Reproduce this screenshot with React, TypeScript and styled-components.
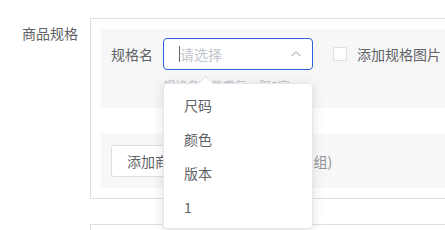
import React from "react";
import styled, { createGlobalStyle } from "styled-components";

const Global = createGlobalStyle`
  html, body { margin: 0; padding: 0; background: #fff; overflow: hidden; }
  body { font-family: "Noto Sans CJK SC", "Noto Sans", sans-serif; font-size: 14px; color: #606266; }
`;

const Page = styled.div`
  width: 445px;
  height: 230px;
  overflow: hidden;
  padding-top: 17px;
  box-sizing: border-box;
`;

const FormRow = styled.div`
  display: flex;
  align-items: flex-start;
  margin-bottom: 24px;
`;

const FormLabel = styled.div`
  width: 90px;
  flex: none;
  box-sizing: border-box;
  padding-right: 12px;
  text-align: right;
  line-height: 32px;
  font-size: 14px;
  color: #606266;
`;

const Box = styled.div`
  flex: none;
  width: 600px;
  margin-top: 1px;
  border: 1px solid #dcdfe6;
  padding: 10px;
  box-sizing: border-box;
  min-height: 40px;
`;

const GrayBlock = styled.div<{ $pt: number; $pb: number }>`
  background: #f7f7f7;
  padding: ${(p) => p.$pt}px 10px ${(p) => p.$pb}px 10px;
  display: flex;
  align-items: flex-start;
`;

const Spacer = styled.div`
  height: 26px;
`;

const SpecLabel = styled.div`
  line-height: 32px;
  margin-right: 10px;
  color: #606266;
`;

const SelectWrap = styled.div`
  position: relative;
  width: 150px;
`;

const SelectBox = styled.div`
  height: 32px;
  box-sizing: border-box;
  border: 1px solid #2c64d8;
  border-radius: 4px;
  background: #fff;
  display: flex;
  align-items: center;
  padding: 0 10px 0 15px;
`;

const Placeholder = styled.span`
  flex: 1;
  color: #c0c4cc;
  border-left: 1px solid #606266;
  line-height: 16px;
`;

const Tip = styled.div`
  font-size: 12px;
  line-height: 16px;
  margin-top: 8px;
  color: #c0c4cc;
  white-space: nowrap;
  height: 24px;
`;

const Dropdown = styled.div`
  position: absolute;
  left: 0;
  top: 45px;
  width: 150px;
  box-sizing: border-box;
  background: #fff;
  border: 1px solid #e4e7ed;
  border-radius: 4px;
  box-shadow: 0 2px 12px rgba(0, 0, 0, 0.12);
  padding: 4px 0;
  z-index: 5;
`;

const Arrow = styled.div`
  position: absolute;
  top: -6px;
  left: 36px;
  width: 10px;
  height: 10px;
  background: #fff;
  border-left: 1px solid #e4e7ed;
  border-top: 1px solid #e4e7ed;
  transform: rotate(45deg);
`;

const Option = styled.div`
  height: 34px;
  line-height: 34px;
  padding-left: 20px;
  color: #606266;
  font-size: 14px;
`;

const CheckArea = styled.label`
  display: flex;
  align-items: center;
  height: 32px;
  margin-left: 20px;
  white-space: nowrap;
  color: #606266;
`;

const CheckBox = styled.span`
  width: 14px;
  height: 14px;
  box-sizing: border-box;
  border: 1px solid #dcdfe6;
  border-radius: 2px;
  background: #fff;
  margin-right: 10px;
`;

const Button = styled.button`
  height: 32px;
  padding: 0 15px;
  border: 1px solid #dcdfe6;
  border-radius: 3px;
  background: #fff;
  color: #606266;
  font-family: inherit;
  font-size: 14px;
  white-space: nowrap;
`;

const Hint = styled.span`
  line-height: 32px;
  margin-left: 4px;
  color: #909399;
  white-space: nowrap;
`;

export default function App() {
  return (
    <Page>
      <Global />
      <FormRow>
        <FormLabel>商品规格</FormLabel>
        <Box>
          <GrayBlock $pt={9} $pb={6}>
            <SpecLabel>规格名</SpecLabel>
            <SelectWrap>
              <SelectBox>
                <Placeholder>请选择</Placeholder>
                <svg width="12" height="12" viewBox="0 0 12 12" fill="none">
                  <path d="M1.5 8.2 L6 3.8 L10.5 8.2" stroke="#c0c4cc" strokeWidth="1.3" />
                </svg>
              </SelectBox>
              <Tip>规格名不能重复，限5字</Tip>
              <Dropdown>
                <Arrow />
                <Option>尺码</Option>
                <Option>颜色</Option>
                <Option>版本</Option>
                <Option>1</Option>
              </Dropdown>
            </SelectWrap>
            <CheckArea>
              <CheckBox />
              添加规格图片
            </CheckArea>
          </GrayBlock>
          <Spacer />
          <GrayBlock $pt={11} $pb={11}>
            <Button>添加商品规格</Button>
            <Hint>(最多可添加3组)</Hint>
          </GrayBlock>
        </Box>
      </FormRow>
      <FormRow>
        <FormLabel />
        <Box />
      </FormRow>
    </Page>
  );
}
